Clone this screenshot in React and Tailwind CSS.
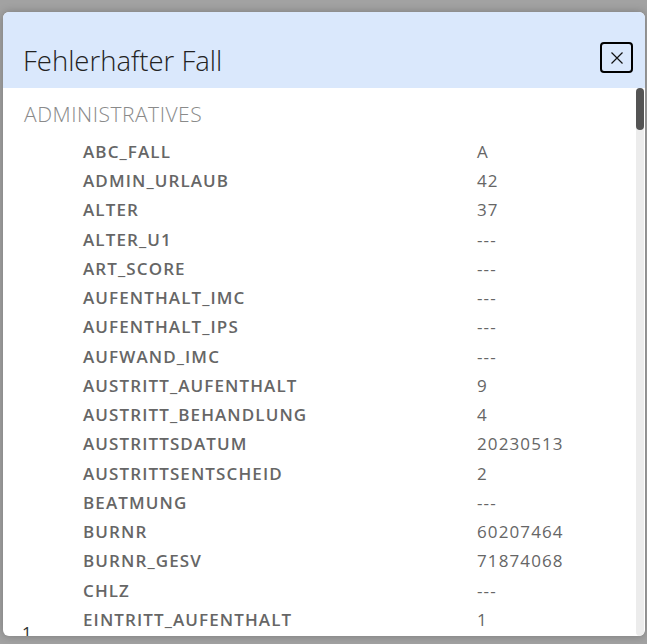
import React from "react";

const rows = [
  ["ABC_FALL", "A"],
  ["ADMIN_URLAUB", "42"],
  ["ALTER", "37"],
  ["ALTER_U1", "---"],
  ["ART_SCORE", "---"],
  ["AUFENTHALT_IMC", "---"],
  ["AUFENTHALT_IPS", "---"],
  ["AUFWAND_IMC", "---"],
  ["AUSTRITT_AUFENTHALT", "9"],
  ["AUSTRITT_BEHANDLUNG", "4"],
  ["AUSTRITTSDATUM", "20230513"],
  ["AUSTRITTSENTSCHEID", "2"],
  ["BEATMUNG", "---"],
  ["BURNR", "60207464"],
  ["BURNR_GESV", "71874068"],
  ["CHLZ", "---"],
  ["EINTRITT_AUFENTHALT", "1"],
];

export default function App() {
  return (
    <div
      className="h-[644px] w-[647px] overflow-hidden bg-[#a2a2a2] pt-[12px] pl-[3px] pr-[2px] pb-[8px] flex"
      style={{ fontFamily: '"Open Sans", "Liberation Sans", sans-serif' }}
    >
      <div className="relative flex-1 flex flex-col rounded-[6px] overflow-hidden bg-white shadow-[0_0_8px_rgba(0,0,0,0.25)]">
        <div className="h-[76px] shrink-0 bg-[#dae8fc] flex items-start justify-between pl-[20px] pr-[12px] pt-[30px]">
          <h1 className="text-[27.5px] leading-[38px] font-light text-[#222]">Fehlerhafter Fall</h1>
          <button className="w-[33px] h-[31px] border-2 border-black rounded-[4px] flex items-center justify-center">
            <svg width="14" height="14" viewBox="0 0 14 14" fill="none" stroke="#111" strokeWidth="1.2">
              <path d="M1.5 1.5 L12.5 12.5 M12.5 1.5 L1.5 12.5" />
            </svg>
          </button>
        </div>
        <div className="flex-1 flex min-h-0">
          <div className="flex-1 overflow-hidden pl-[21px] pt-[13px]">
            <div className="text-[21px] leading-[27px] font-light text-[#8a8a8a] tracking-[0.025em]">ADMINISTRATIVES</div>
            <div className="mt-[9px] pl-[59px]">
              {rows.map(([k, v]) => (
                <div key={k} className="flex h-[29.25px] items-center text-[17px] text-[#666] tracking-[0.065em]">
                  <div className="w-[394px] font-semibold">{k}</div>
                  <div className="font-normal">{v}</div>
                </div>
              ))}
            </div>
          </div>
          <div className="w-[9px] shrink-0 flex flex-col items-center pr-[1px]">
            <div className="w-[8px] flex-1 rounded-full bg-[#ececec] flex flex-col">
              <div className="h-[42px] rounded-full bg-[#545454]" />
            </div>
          </div>
        </div>
        <span className="absolute left-[19px] bottom-[-9px] text-[17px] leading-[24px] text-[#333]">1</span>
      </div>
    </div>
  );
}
